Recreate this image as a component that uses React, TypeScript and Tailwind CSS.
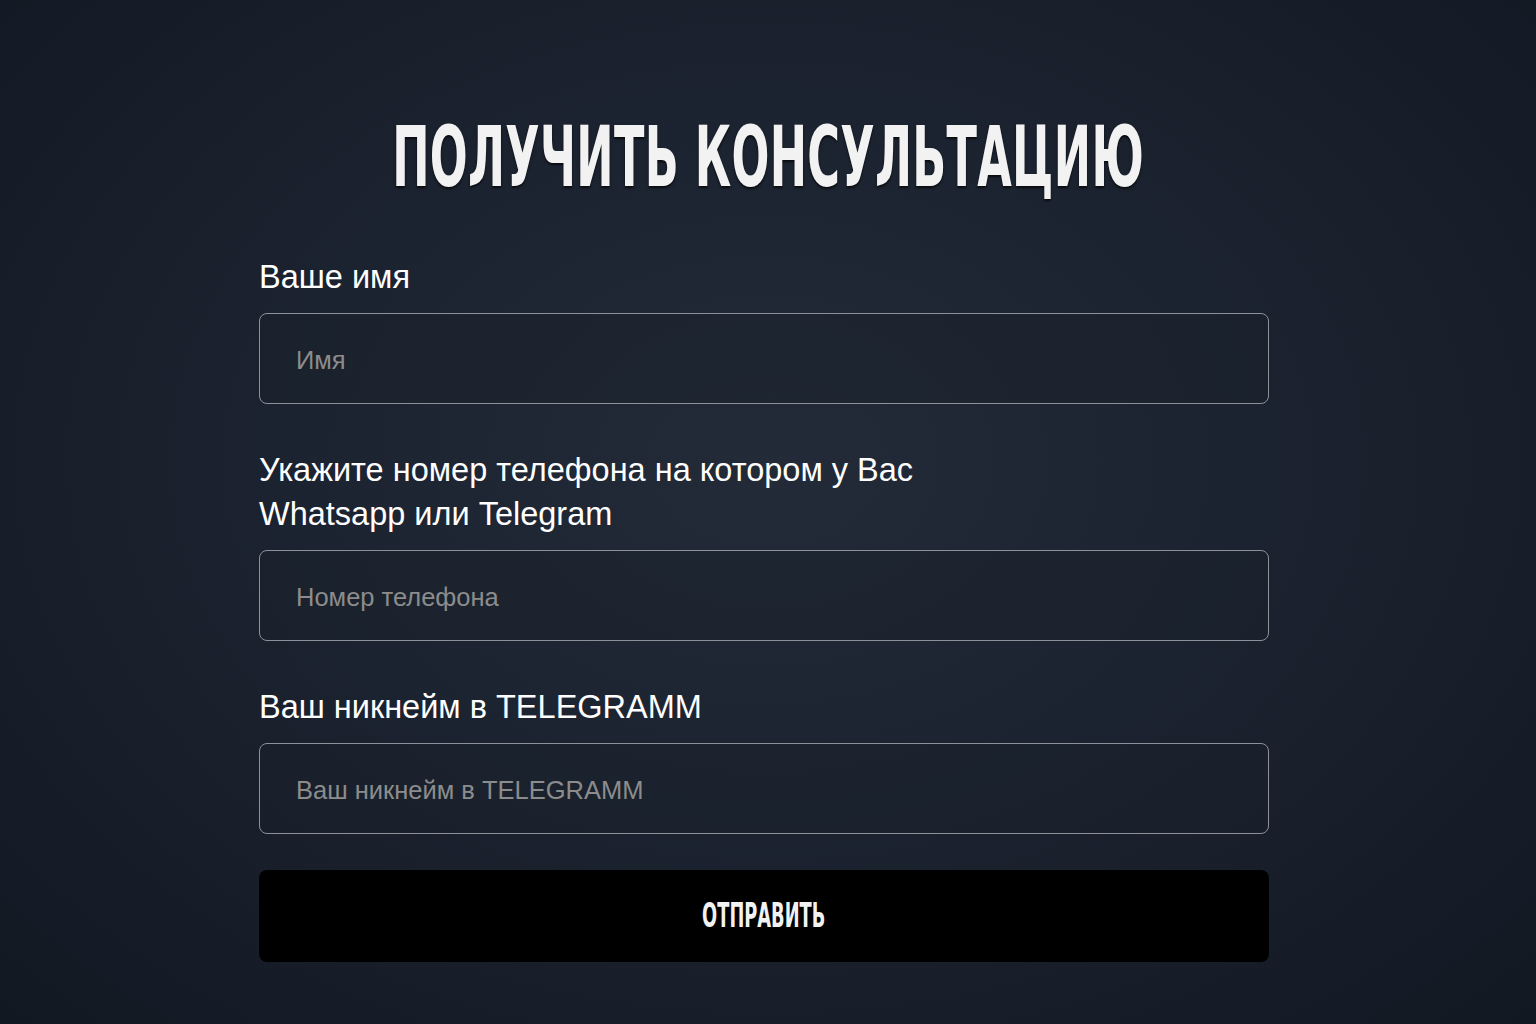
import React, { useState } from 'react'

type Field = {
  name: string
  label: string[]
  placeholder: string
}

const fields: Field[] = [
  { name: 'name', label: ['Ваше имя'], placeholder: 'Имя' },
  {
    name: 'phone',
    label: ['Укажите номер телефона на котором у Вас', 'Whatsapp или Telegram'],
    placeholder: 'Номер телефона',
  },
  { name: 'nick', label: ['Ваш никнейм в TELEGRAMM'], placeholder: 'Ваш никнейм в TELEGRAMM' },
]

function App() {
  const [values, setValues] = useState<Record<string, string>>({})

  const update = (name: string, value: string) => {
    setValues({ ...values, [name]: value })
  }

  return (
    <div className="flex min-h-screen w-full justify-center pr-[8px] bg-[radial-gradient(ellipse_at_50%_45%,#232b38_0%,#1c2330_45%,#121822_100%)] font-['Liberation_Sans',Arial,sans-serif]">
      <div className="w-[1010px] pt-[112px] pb-[62px]">
        <div className="flex justify-center pl-[8px]">
          <h1 className="inline-block origin-center scale-x-[0.59] whitespace-nowrap font-['Liberation_Sans_Narrow','DejaVu_Sans_Condensed',sans-serif] text-[84px] font-bold leading-[90px] tracking-[0.5px] text-[#f2f2f2] [text-shadow:0_2px_3px_rgba(0,0,0,0.7)]">
            ПОЛУЧИТЬ КОНСУЛЬТАЦИЮ
          </h1>
        </div>

        <form className="mt-[53px] flex flex-col gap-[44px]" onSubmit={(e) => e.preventDefault()}>
          {fields.map((f) => (
            <div key={f.name} className="flex flex-col gap-[14px]">
              <label htmlFor={f.name} className="text-[32.5px] leading-[44px] text-white">
                {f.label.map((line) => (
                  <span key={line} className="block">
                    {line}
                  </span>
                ))}
              </label>
              <input
                id={f.name}
                type="text"
                placeholder={f.placeholder}
                value={values[f.name] ?? ''}
                onChange={(e) => update(f.name, e.target.value)}
                className="h-[91px] w-full rounded-lg border border-[#8d9199] bg-[#1a202b]/40 px-9 pt-1 text-[25.5px] text-white outline-none placeholder:text-[#8c8c8c]"
              />
            </div>
          ))}

          <button
            type="submit"
            className="-mt-[8px] flex h-[92px] w-full items-center justify-center rounded-lg bg-black"
          >
            <span className="inline-block scale-x-[0.6] font-['Liberation_Sans_Narrow','DejaVu_Sans_Condensed',sans-serif] text-[33px] font-bold text-[#f2f2f2]">
              ОТПРАВИТЬ
            </span>
          </button>
        </form>
      </div>
    </div>
  )
}

export default App
